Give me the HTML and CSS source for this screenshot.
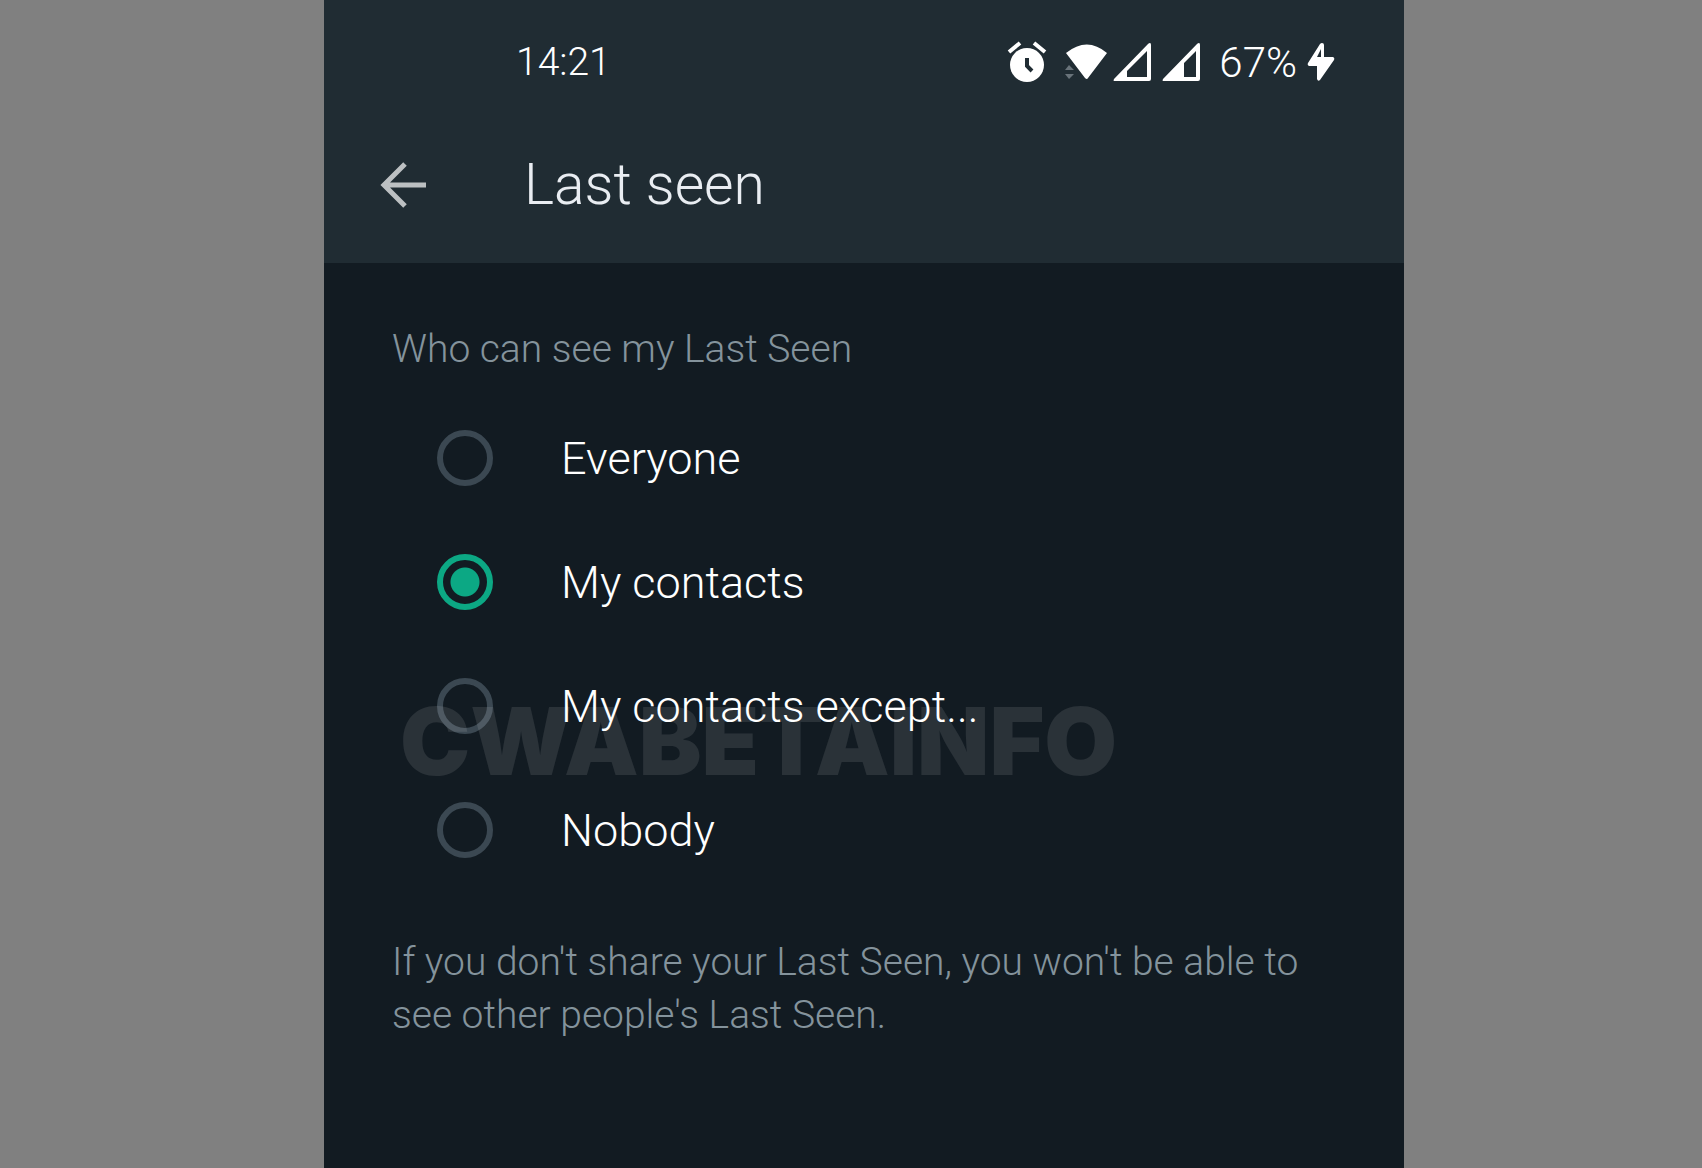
FILE: index.html
```html
<!DOCTYPE html>
<html lang="en">
<head>
  <meta charset="UTF-8">
  <meta name="viewport" content="width=device-width, initial-scale=1">
  <title>Last seen</title>
  <link rel="stylesheet" href="styles.css">
</head>
<body>
  <div class="screen">
    <header class="header">
      <div class="status-bar">
        <span class="clock">14:21</span>
        <div class="status-icons">
          <svg class="icon-alarm" width="40" height="42" viewBox="0 0 40 42">
            <path d="M2 11 L13 2 M38 11 L27 2" stroke="#fff" stroke-width="4" fill="none"/>
            <circle cx="20" cy="24" r="17" fill="#fff"/>
            <path d="M20 17 V25 L25 30" stroke="#202c33" stroke-width="4" fill="none"/>
          </svg>
          <svg class="icon-wifi" width="43" height="36" viewBox="0 0 43 36">
            <path d="M1 9 Q22 -8 42 9 L23 34 Q22 36 20 34 Z" fill="#fff"/>
            <path d="M0 26 L4 21 L9 26 Z M0 30 H9 L4 35 Z" fill="#69737a"/>
          </svg>
          <svg class="icon-signal" width="38" height="38" viewBox="0 0 38 38">
            <path fill-rule="evenodd" d="M37 0 Q38 0 38 2 V36 Q38 38 36 38 H1 Q0 38 1 36 L35 1 Q36 0 37 0 Z M34 8 L14 28 V34 H34 Z" fill="#fff"/>
          </svg>
          <svg class="icon-signal" width="38" height="38" viewBox="0 0 38 38">
            <path fill-rule="evenodd" d="M37 0 Q38 0 38 2 V36 Q38 38 36 38 H1 Q0 38 1 36 L35 1 Q36 0 37 0 Z M34 8 L22 20 V34 H34 Z" fill="#fff"/>
          </svg>
          <span class="battery">67%</span>
          <svg class="icon-bolt" width="28" height="38" viewBox="0 0 28 38">
            <path fill-rule="evenodd" d="M15 0 Q17 0 17 2 V14 H26 Q28 15 27 17 L13 37 Q11 39 10 36 V23 H2 Q0 22 1 20 L13 1 Q14 0 15 0 Z M14 6 L10 14 H14 Z" fill="#fff"/>
          </svg>
        </div>
      </div>
      <div class="app-bar">
        <button class="back" type="button" aria-label="Back">
          <svg width="46" height="46" viewBox="0 0 46 46">
            <path d="M25 2 L4 23 L25 44 M4 23 H46" stroke="#bcc0c2" stroke-width="5" fill="none"/>
          </svg>
        </button>
        <h1 class="title">Last seen</h1>
      </div>
    </header>

    <main class="content">
      <fieldset class="options">
        <legend class="legend">Who can see my Last Seen</legend>
        <label class="option">
          <input type="radio" name="last-seen" value="everyone">
          <span>Everyone</span>
        </label>
        <label class="option">
          <input type="radio" name="last-seen" value="contacts" checked>
          <span>My contacts</span>
        </label>
        <label class="option">
          <input type="radio" name="last-seen" value="except">
          <span>My contacts except...</span>
        </label>
        <label class="option">
          <input type="radio" name="last-seen" value="nobody">
          <span>Nobody</span>
        </label>
        <div class="watermark">CWABETAINFO</div>
      </fieldset>
      <p class="note">If you don't share your Last Seen, you won't be able to see other people's Last Seen.</p>
    </main>
  </div>
</body>
</html>
```
FILE: styles.css
```css
* {
  box-sizing: border-box;
}
body {
  margin: 0;
  padding: 0 298px 0 324px;
  background: #808080;
  font-family: Roboto, "Liberation Sans", sans-serif;
  font-weight: 300;
  font-size: 39px;
}
.screen {
  min-height: 100vh;
  background: #121b22;
  color: #fff;
}
.header {
  background: #202c33;
}
.status-bar {
  display: flex;
  align-items: center;
  justify-content: space-between;
  height: 124px;
  padding: 0 69px 0 192px;
}
.status-icons {
  display: flex;
  align-items: center;
}
.icon-alarm {
  margin-right: 18px;
}
.icon-wifi {
  margin-right: 5px;
}
.icon-signal {
  margin-right: 11px;
}
.battery {
  margin: 0 10px 0 8px;
  font-size: 42px;
}
.app-bar {
  display: flex;
  align-items: center;
  height: 139px;
  padding: 0 56px 18px;
}
.back {
  display: flex;
  padding: 0;
  border: 0;
  background: none;
  cursor: pointer;
}
.title {
  margin: 0 0 0 98px;
  font-size: 57px;
  font-weight: 300;
  color: #e9edf2;
}

/* privacy choices */
.content {
  padding: 60px 68px;
}
.options {
  position: relative;
  margin: 0;
  padding: 0;
  border: 0;
}
.legend {
  padding: 0;
  margin-bottom: 20px;
  line-height: 53px;
  color: #84939c;
}
.option {
  display: flex;
  align-items: center;
  gap: 68px;
  height: 124px;
  padding-left: 45px;
  font-size: 45px;
}
.option input {
  appearance: none;
  flex: none;
  width: 56px;
  height: 56px;
  margin: 0;
  border: 6px solid #3b4852;
  border-radius: 50%;
}
.option input:checked {
  border-color: #0ca884;
  background: radial-gradient(circle, #0ca884 14px, transparent 15px);
}
.watermark {
  position: absolute;
  left: 8px;
  top: 288px;
  font-family: Inter, sans-serif;
  font-size: 94px;
  font-weight: 900;
  color: rgba(255, 255, 255, 0.1);
  pointer-events: none;
}
.note {
  margin: 44px 0 0;
  line-height: 53px;
  color: #84939c;
}
```
